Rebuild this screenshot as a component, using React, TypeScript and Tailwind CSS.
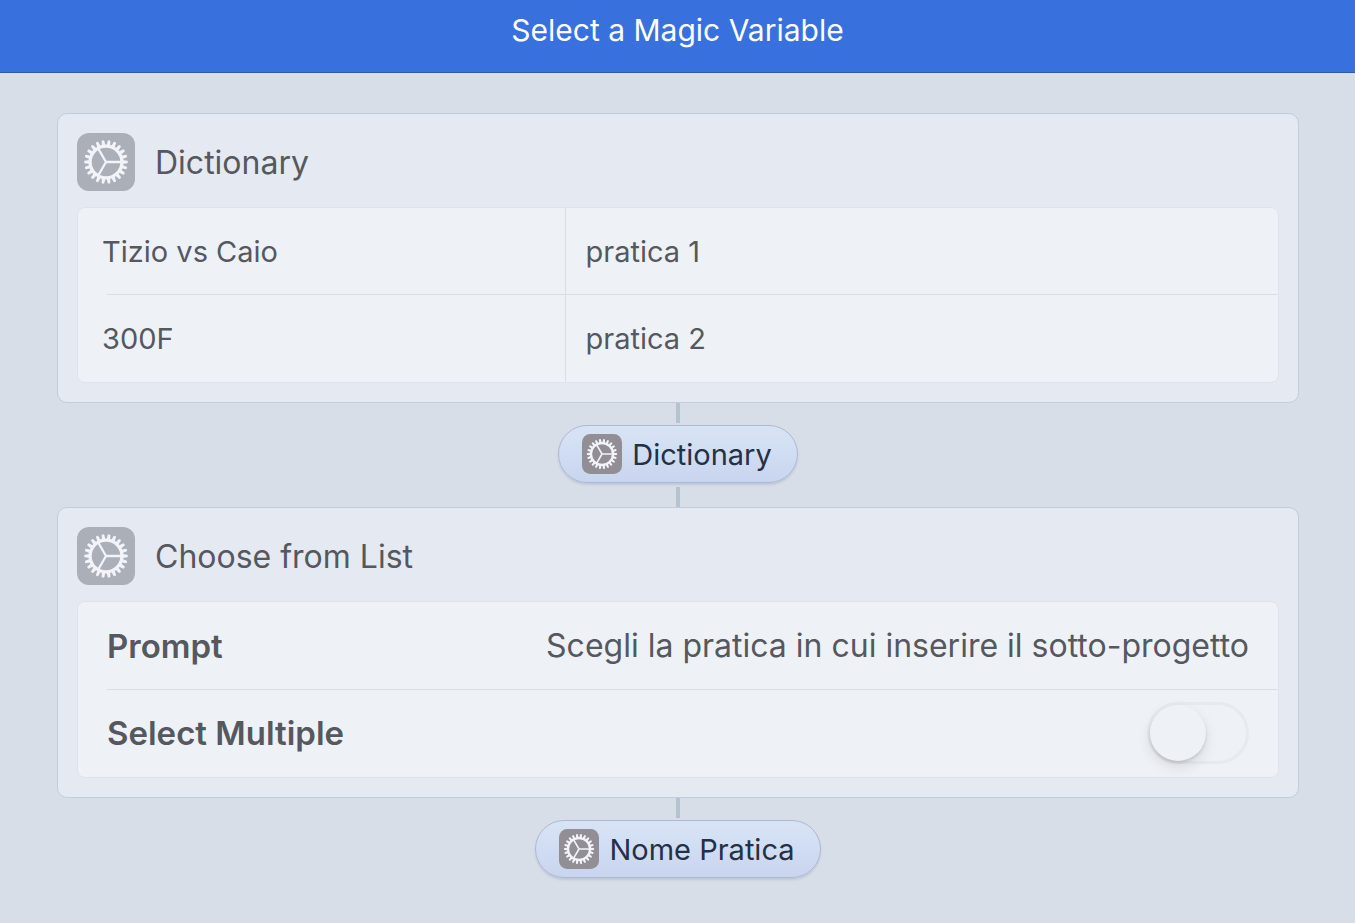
import { useId, useState } from "react";
import type { ReactNode } from "react";

const TEETH = Array.from({ length: 22 }, (_, i) => (i * 360) / 22);

function GearIcon({ className }: { className: string }) {
  return (
    <svg viewBox="0 0 58 58" className={className} aria-hidden="true">
      <rect width="58" height="58" rx="12" className="fill-current" />
      <g className="fill-[#f2f4f9]">
        {TEETH.map((a) => (
          <path
            key={a}
            d="M45 27.1 L50.4 27.7 Q51.6 29 50.4 30.3 L45 30.9 Z"
            transform={`rotate(${a} 29 29)`}
          />
        ))}
      </g>
      <g fill="none" className="stroke-[#f2f4f9]">
        <circle cx="29" cy="29" r="15.9" strokeWidth="3.2" />
        <path d="M29 29 H44 M29 29 L21.5 16 M29 29 L21.5 42" strokeWidth="2.3" />
      </g>
    </svg>
  );
}

function Card({ title, children }: { title: string; children: ReactNode }) {
  return (
    <section className="w-full rounded-[10px] border border-[#c2ccdc] bg-[#e5e9f2] p-[19px]">
      <header className="mb-4 flex items-center gap-5">
        <GearIcon className="size-[58px] shrink-0 text-[#abafb8]" />
        <h2 className="pt-0.5 text-[32px] leading-[40px] text-[#55585f]">{title}</h2>
      </header>
      <div className="overflow-hidden rounded-lg border border-[#e0e4ea] bg-[#eef2f7]">{children}</div>
    </section>
  );
}

function Connector() {
  return <div className="h-5 w-1 bg-[#b3c3cf]" />;
}

function VariablePill({ label }: { label: string }) {
  return (
    <button
      type="button"
      className="mt-0.5 mb-1 flex h-[58px] items-center gap-[10px] rounded-full border border-[#adb9d3] bg-linear-to-b from-[#d8e4f5] to-[#c9d5ef] pr-[25px] pl-[23px] text-[29px] leading-[36px] text-[#243046] shadow-[0_2px_2px_rgba(120,135,170,0.25)]"
    >
      <GearIcon className="size-10 shrink-0 text-[#918f95]" />
      <span className="pt-0.5">{label}</span>
    </button>
  );
}

const ENTRIES = [
  { key: "Tizio vs Caio", value: "pratica 1" },
  { key: "300F", value: "pratica 2" },
];

export default function App() {
  const [multiple, setMultiple] = useState(false);
  const promptId = useId();
  const multipleId = useId();

  return (
    <div className="min-h-screen bg-[#d8dee8] font-[Inter,'Liberation_Sans',sans-serif]">
      <header className="flex h-[73px] justify-center border-b border-[#2f58a8] bg-[#3870de] pt-3">
        <h1 className="text-[30px] leading-[36px] text-white">Select a Magic Variable</h1>
      </header>
      <main className="flex flex-col items-center pt-10 pr-14 pb-10 pl-[57px]">
        <Card title="Dictionary">
          <table className="w-full table-fixed border-collapse text-left text-[29px] leading-[36px] text-[#55585f]">
            <colgroup>
              <col className="w-[487px]" />
              <col />
            </colgroup>
            <tbody>
              {ENTRIES.map((e, i) => (
                <tr key={e.key} className="h-[88px] first:h-[86px]">
                  <td className="relative p-0 pt-0.5 pl-6">
                    {i > 0 && <span className="absolute top-0 right-0 left-[29px] h-px bg-[#d9dee5]" />}
                    {e.key}
                  </td>
                  <td className="relative border-l border-[#d9dee5] p-0 pt-0.5 pl-5">
                    {i > 0 && <span className="absolute top-0 right-0 left-0 h-px bg-[#d9dee5]" />}
                    {e.value}
                  </td>
                </tr>
              ))}
            </tbody>
          </table>
        </Card>
        <Connector />
        <VariablePill label="Dictionary" />
        <Connector />
        <Card title="Choose from List">
          <div className="flex h-[87px] items-center pr-[29px] pl-[29px]">
            <label htmlFor={promptId} className="shrink-0 text-[33px] leading-[40px] font-semibold text-[#55585f]">
              Prompt
            </label>
            <input
              id={promptId}
              defaultValue="Scegli la pratica in cui inserire il sotto-progetto"
              className="min-w-0 flex-1 bg-transparent text-right text-[32px] leading-[40px] text-[#55585f] outline-none"
            />
          </div>
          <div className="ml-[29px] flex h-[88px] items-center justify-between border-t border-[#d9dee5] pr-[29px] pb-px">
            <label htmlFor={multipleId} className="text-[33px] leading-[40px] font-semibold text-[#55585f]">
              Select Multiple
            </label>
            <input
              id={multipleId}
              type="checkbox"
              role="switch"
              checked={multiple}
              onChange={(e) => setMultiple(e.target.checked)}
              className="flex h-[62px] w-[102px] appearance-none items-center rounded-full border-[3px] border-[#e6e9ed] before:size-14 before:rounded-full before:bg-[#eef2f7] before:shadow-[0_6px_14px_rgba(0,0,0,0.1),0_2px_3px_rgba(0,0,0,0.12)] checked:justify-end checked:bg-[#4cd964]"
            />
          </div>
        </Card>
        <Connector />
        <VariablePill label="Nome Pratica" />
      </main>
    </div>
  );
}
